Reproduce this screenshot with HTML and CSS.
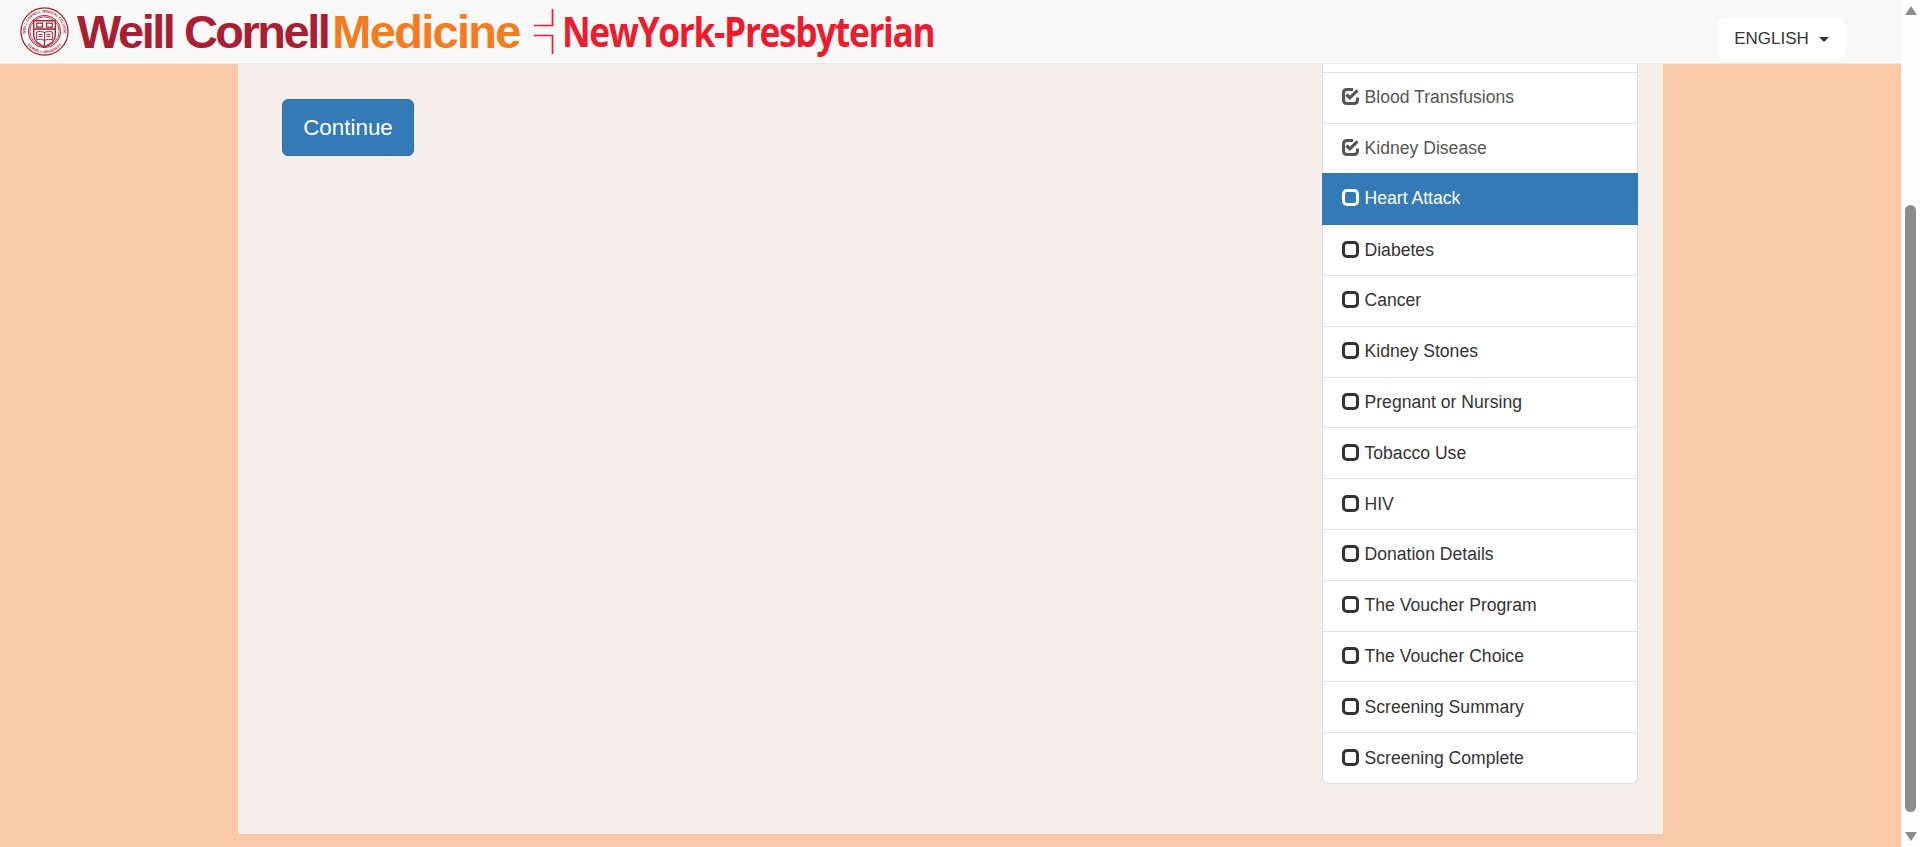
FILE: index.html
```html
<!DOCTYPE html>
<html lang="en">
<head>
<meta charset="utf-8">
<title>Screening</title>
<link rel="stylesheet" href="styles.css">
</head>
<body>
<div class="window">
  <div class="viewport">
    <header class="navbar">
      <div class="logo">
        <svg class="seal" viewBox="0 0 50 50" aria-hidden="true">
          <defs>
            <path id="ring-top" d="M11.200 38.800A19.500 19.500 0 1 1 38.800 38.800"/>
            <path id="ring-bottom" d="M3 25A22 22 0 0 0 47 25"/>
          </defs>
          <circle cx="25" cy="25" r="24" fill="none" stroke="#a81f32" stroke-width="1.300"/>
          <circle cx="25" cy="25" r="16.500" fill="none" stroke="#a81f32" stroke-width="1"/>
          <circle cx="25" cy="25" r="15" fill="none" stroke="#a81f32" stroke-width=".8"/>
          <text class="seal-text"><textPath href="#ring-top" startOffset="50%">WEILL CORNELL MEDICAL COLLEGE</textPath></text>
          <text class="seal-text"><textPath href="#ring-bottom" startOffset="50%">CORNELL UNIVERSITY</textPath></text>
          <path d="M14 14H36V29C36 35 30 38 25 41C20 38 14 35 14 29Z" fill="#fff" stroke="#a81f32" stroke-width="1.400"/>
          <path d="M14 22.500H36" stroke="#a81f32" stroke-width="1.600"/>
          <path d="M17 16.500h6v4h-6zM27 16.500h6v4h-6z" fill="none" stroke="#a81f32" stroke-width="1.200"/>
          <path d="M17 25.500q4-1.500 8 .5q4-2 8-.5v8q-4-1.500-8 .5q-4-2-8-.5zM25 26v8M19 28h4M19 30h4M27 28h4M27 30h4" fill="none" stroke="#a81f32" stroke-width="1"/>
          <path d="M25 34v6" stroke="#a81f32" stroke-width="1.400"/>
        </svg>
        <span class="wm-weill">Weill Cornell</span>
        <span class="wm-med">Medicine</span>
        <svg class="mark" viewBox="0 0 20 46" aria-hidden="true">
          <path d="M0 16.500H18.500V0M0 26.500H18.500V45" fill="none" stroke="#ed1b2e" stroke-width="1.700"/>
        </svg>
        <span class="nyp">NewYork-Presbyterian</span>
      </div>
      <button class="lang" type="button">ENGLISH<span class="caret"></span></button>
    </header>
    <main class="page">
      <section class="container">
        <div class="content">
          <button class="continue" type="button">Continue</button>
        </div>
        <nav class="list">
          <a class="item stub"></a>
          <a class="item done"><svg class="ico"><use href="#chk"/></svg>Blood Transfusions</a>
          <a class="item done"><svg class="ico"><use href="#chk"/></svg>Kidney Disease</a>
          <a class="item active"><svg class="ico"><use href="#box"/></svg>Heart Attack</a>
          <a class="item"><svg class="ico"><use href="#box"/></svg>Diabetes</a>
          <a class="item"><svg class="ico"><use href="#box"/></svg>Cancer</a>
          <a class="item"><svg class="ico"><use href="#box"/></svg>Kidney Stones</a>
          <a class="item"><svg class="ico"><use href="#box"/></svg>Pregnant or Nursing</a>
          <a class="item"><svg class="ico"><use href="#box"/></svg>Tobacco Use</a>
          <a class="item"><svg class="ico"><use href="#box"/></svg>HIV</a>
          <a class="item"><svg class="ico"><use href="#box"/></svg>Donation Details</a>
          <a class="item"><svg class="ico"><use href="#box"/></svg>The Voucher Program</a>
          <a class="item"><svg class="ico"><use href="#box"/></svg>The Voucher Choice</a>
          <a class="item"><svg class="ico"><use href="#box"/></svg>Screening Summary</a>
          <a class="item"><svg class="ico"><use href="#box"/></svg>Screening Complete</a>
        </nav>
      </section>
    </main>
  </div>
  <div class="scrollbar" aria-hidden="true">
    <span class="arrow up"></span>
    <div class="track"><span class="thumb"></span></div>
    <span class="arrow down"></span>
  </div>
</div>
<svg class="defs" aria-hidden="true">
  <symbol id="box" viewBox="0 0 17 17">
    <rect x="1.500" y="1.500" width="14" height="14" rx="3.500" fill="none" stroke="currentColor" stroke-width="3"/>
  </symbol>
  <symbol id="chk" viewBox="0 0 17 17">
    <path d="M11 1.500H5Q1.500 1.500 1.500 5V12Q1.500 15.500 5 15.500H12Q15.500 15.500 15.500 12V9.500" fill="none" stroke="currentColor" stroke-width="3"/>
    <path d="M4.500 6.500L7.800 9.800L15.500 2.300" fill="none" stroke="currentColor" stroke-width="3.200"/>
  </symbol>
</svg>
</body>
</html>
```

FILE: styles.css
```css
* { box-sizing: border-box; }
html, body { margin: 0; height: 100%; overflow: hidden; }
body { font-family: "Liberation Sans", Arial, sans-serif; color: #333; }
.window { display: flex; height: 847px; }
.viewport { flex: 1; min-width: 0; display: flex; flex-direction: column; background: #f9c9a8; }

.navbar {
  height: 64px; flex: none; display: flex; align-items: flex-start; justify-content: space-between;
  background: #f8f8f8; border-bottom: 1px solid #e7e7e7; padding: 0 56px 0 20px; position: relative; z-index: 2;
}
.logo { display: flex; align-items: center; height: 63px; white-space: nowrap; }
.seal { width: 49px; height: 49px; flex: none; margin-right: 8px; }
.seal-text { font: 700 3.600px "Liberation Sans", Arial, sans-serif; fill: #a81f32; text-anchor: middle; }
.wm-weill { font-size: 47px; font-weight: 700; letter-spacing: -2.500px; line-height: 1; color: #a81f32; }
.wm-med { font-size: 47px; font-weight: 700; letter-spacing: -1.700px; line-height: 1; color: #f47b20; margin-left: 4px; }
.mark { width: 20px; height: 46px; flex: none; margin: 0 8px 0 14px; }
.nyp {
  font-family: "Open Sans", sans-serif; font-size: 41px; font-weight: 700; letter-spacing: -1.550px;
  color: #ed1b2e; line-height: 1; display: inline-block; transform: scaleX(.86); transform-origin: left center;
}
.lang {
  margin-top: 19px; width: 127px; height: 39px; background: #fff; border: 0; border-radius: 5px;
  font: 17px "Liberation Sans", Arial, sans-serif; color: #333; padding: 0;
}
.caret { display: inline-block; margin-left: 10px; vertical-align: middle; border-top: 5px solid #333; border-left: 5px solid transparent; border-right: 5px solid transparent; }

.page { flex: 1; min-height: 0; padding: 0 0 13px 238px; }
.container { width: 1425px; height: 770px; background: #f6eee8; display: flex; justify-content: space-between; padding-right: 25px; }
.content { padding: 35px 0 0 44px; }
.continue {
  width: 132px; height: 57px; background: #337ab7; border: 1px solid #2e6da4; border-radius: 6px;
  color: #fff; font: 22.400px "Liberation Sans", Arial, sans-serif; padding: 0;
}
.list { width: 316px; height: 720px; display: flex; flex-direction: column; }
.item {
  height: 50.800px; flex: none; display: flex; align-items: center; padding: 0 19px;
  background: #fff; border: 1px solid #ddd; border-top: 0; font-size: 17.600px; color: #333; white-space: nowrap;
}
.item.stub { height: 8.800px; }
.item.done { color: #555; }
.item.active { background: #337ab7; color: #fff; border-color: #337ab7; margin-top: -1px; height: 51.800px; }
.item:last-child { border-radius: 0 0 6px 6px; }
.ico { width: 17px; height: 17px; flex: none; margin-right: 5.500px; position: relative; top: -1px; }

.scrollbar { width: 19px; flex: none; background: #fdfdfd; display: flex; flex-direction: column; align-items: center; }
.arrow { flex: none; width: 0; height: 0; border-left: 6.500px solid transparent; border-right: 6.500px solid transparent; }
.arrow.up { border-bottom: 9px solid #8c8c8c; margin-top: 6px; }
.arrow.down { border-top: 9px solid #8c8c8c; margin-bottom: 6px; }
.track { flex: 1; width: 100%; padding: 190px 4px 20px; }
.thumb { display: block; height: 100%; background: #8c8c8c; border-radius: 6px; }
.defs { display: none; }
```
